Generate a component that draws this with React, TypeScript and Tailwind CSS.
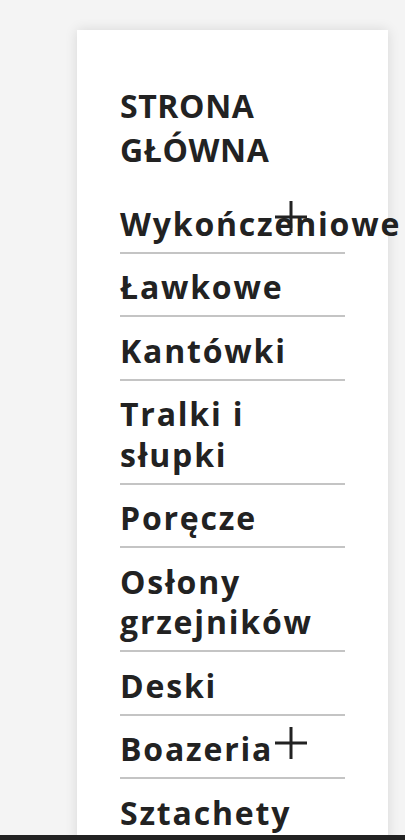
const items: { label: string; plus?: boolean }[] = [
  { label: 'Wykończeniowe', plus: true },
  { label: 'Ławkowe' },
  { label: 'Kantówki' },
  { label: 'Tralki i słupki' },
  { label: 'Poręcze' },
  { label: 'Osłony grzejników' },
  { label: 'Deski' },
  { label: 'Boazeria', plus: true },
  { label: 'Sztachety' },
];

function PlusIcon() {
  return (
    <svg width="32" height="32" viewBox="0 0 32 32" className="absolute left-[155px] top-[11px]">
      <path d="M16 0V32M0 16H32" stroke="#222" strokeWidth="3" fill="none" />
    </svg>
  );
}

export default function App() {
  return (
    <div className="min-h-screen bg-[#f4f4f4] pl-[77px] pr-[17px] pt-[30px] font-['Open_Sans',sans-serif] text-[#222]">
      <nav className="min-h-[810px] w-[311px] bg-white px-[43px] pt-[54px] shadow-[0_0_12px_rgba(0,0,0,0.12)]">
        <h2 className="mb-[18px] text-[32px] font-bold uppercase leading-[44px] tracking-[0.6px]">Strona główna</h2>
        <ul>
          {items.map((item) => (
            <li
              key={item.label}
              className="relative w-[225px] border-b-2 border-[#c4c4c4] pb-[7.5px] pt-[13.5px] text-[32px] font-bold leading-[40.5px] tracking-[1.8px]"
            >
              <span className="whitespace-nowrap">
                {item.label === 'Tralki i słupki' ? (
                  <>Tralki i<br />słupki</>
                ) : item.label === 'Osłony grzejników' ? (
                  <>Osłony<br />grzejników</>
                ) : (
                  item.label
                )}
              </span>
              {item.plus && <PlusIcon />}
            </li>
          ))}
        </ul>
      </nav>
      <div className="fixed bottom-0 left-0 right-0 h-[5px] bg-[#222]" />
    </div>
  );
}
